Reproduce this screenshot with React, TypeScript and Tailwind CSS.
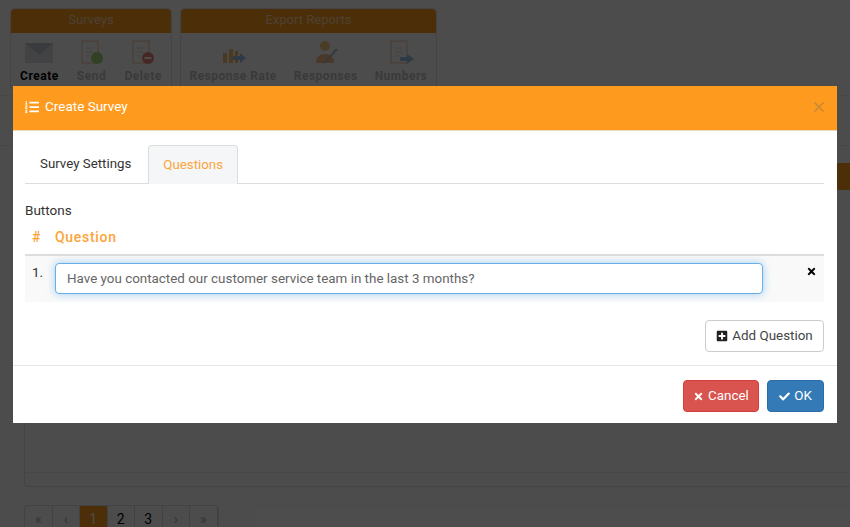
import { FaCheck, FaListOl, FaPlusSquare, FaTimes } from "react-icons/fa";

const font = "font-['Roboto','Liberation_Sans',sans-serif]";

function Panel({ title, className, children }: { title: string; className: string; children: React.ReactNode }) {
  return (
    <div className={`h-[82px] rounded border border-[#e5e5e5] bg-white ${className}`}>
      <div className="h-[24px] rounded-t bg-[#ff9a1f] text-center text-[13px] leading-[22px] text-[#ffd9a8]">{title}</div>
      <div className="flex justify-around pt-[6px]">{children}</div>
    </div>
  );
}

function Tool({ label, dark, children }: { label: string; dark?: boolean; children: React.ReactNode }) {
  return (
    <div className="flex flex-col items-center">
      <svg viewBox="0 0 28 26" className="h-[26px] w-7">{children}</svg>
      <span className={`mt-[2px] text-[12px] leading-[18px] font-bold tracking-[0.5px] ${dark ? "text-black" : "text-[#c4c4c4]"}`}>{label}</span>
    </div>
  );
}

const clipboard = (
  <>
    <rect x="4" y="2" width="16" height="22" fill="#fff" stroke="#f5c09a" strokeWidth="1" />
    <path d="M8 9h7M8 13h7M8 17h4" stroke="#dcdcdc" strokeWidth="1" />
  </>
);

export default function App() {
  return (
    <div className={`relative h-[527px] w-[850px] overflow-hidden bg-white ${font}`}>
      {/* page behind the modal */}
      <div className="flex gap-2 pl-[10px] pt-2">
        <Panel title="Surveys" className="w-[162px]">
          <Tool label="Create" dark>
            <rect x="0" y="4" width="28" height="20" fill="#dfe1e8" />
            <path d="M0 4l14 12L28 4z" fill="#c2c5d0" />
          </Tool>
          <Tool label="Send">
            {clipboard}
            <circle cx="19" cy="19" r="6" fill="#a9d67a" />
          </Tool>
          <Tool label="Delete">
            {clipboard}
            <circle cx="19" cy="19" r="6" fill="#ee7f80" />
            <rect x="15.5" y="18" width="7" height="2" fill="#fff" />
          </Tool>
        </Panel>
        <Panel title="Export Reports" className="w-[257px]">
          <Tool label="Response Rate">
            <path d="M4 24V14h4v10zM10 24V10h4v14zM16 24V12h3v12z" fill="#fbc26f" />
            <path d="M14 17h7v-3l6 5-6 5v-3h-7z" fill="#9cc3ea" />
          </Tool>
          <Tool label="Responses">
            <circle cx="13" cy="7" r="5" fill="#f8cd85" />
            <path d="M4 24c0-6 4-9 9-9s9 3 9 9z" fill="#f7bb8d" />
            <path d="M12 24L25 10" stroke="#bbb" strokeWidth="2" />
          </Tool>
          <Tool label="Numbers">
            {clipboard}
            <path d="M13 18h7v-3l7 5-7 5v-3h-7z" fill="#9cc3ea" />
          </Tool>
        </Panel>
      </div>

      <div className="mt-[5px] h-[51px] border-y border-[#eee]" />

      <div className="ml-[24px] mt-[17px] h-[27px] rounded-tl bg-[#ff9a1f]" />
      <div className="ml-[24px] h-[297px] rounded-bl border-b border-l border-[#e5e5e5] pt-[282px]">
        <div className="border-t border-[#eee]" />
      </div>

      <div className="ml-[24px] mt-[18px] flex w-fit rounded-t border border-b-0 border-[#ddd] text-[14px] leading-[16px] text-black">
        {["«", "‹", "1", "2", "3", "›", "»"].map((p) => (
          <span
            key={p}
            className={`h-[21px] w-[27.5px] border-r border-[#ddd] pt-[5px] text-center ${p === "1" ? "bg-[#ff9a1f] text-white" : ""} ${"«‹›»".includes(p) ? "text-[#aaa]" : ""}`}
          >
            {p}
          </span>
        ))}
      </div>

      {/* backdrop */}
      <div className="absolute inset-0 bg-black/70" />

      {/* modal */}
      <div className="absolute left-[13px] top-[86px] w-[824px] bg-white">
        <div className="flex h-[45px] items-center justify-between border-b border-[#ecd9b8] bg-[#fe9b1f] pb-[3px] pl-3 pr-[13px] text-white">
          <div className="flex items-center gap-[6px] text-[13.5px]">
            <FaListOl size={14} />
            Create Survey
          </div>
          <span className="text-[#cc8a33]">
            <svg viewBox="0 0 10 10" className="h-[10px] w-[10px]" stroke="currentColor" strokeWidth="1.6">
              <path d="M0.5 0.5l9 9M9.5 0.5l-9 9" />
            </svg>
          </span>
        </div>

        <div className="pl-3 pr-[13px] pt-[14px]">
          <div className="flex h-[39px] border-b border-[#ddd] text-[13.3px]">
            <div className="pl-[15px] pr-[17px] pt-[9px] text-[#333]">Survey Settings</div>
            <div className="-mb-px h-[39px] rounded-t border border-b-0 border-[#ddd] bg-[#f5f6f8] px-[14px] pt-[9px] text-[#fda43a]">Questions</div>
          </div>

          <div className="mt-[18px] text-[13.5px] leading-[17px] text-[#333]">Buttons</div>

          <div className="mt-[4px] flex h-[33px] items-start border-b-2 border-[#ddd] pt-[6px] text-[14px] leading-[17px] font-medium text-[#fda43a]">
            <span className="w-[30px] pl-[7px]">#</span>
            <span className="tracking-[0.7px]">Question</span>
          </div>

          <div className="flex h-[46px] items-start bg-[#f9f9f9] pt-[7px]">
            <span className="-mt-px w-[30px] pl-[7px] text-[13.5px] text-[#333]">1.</span>
            <input
              readOnly
              value="Have you contacted our customer service team in the last 3 months?"
              className="h-[31px] w-[708px] rounded border border-[#66afe9] bg-white px-[11px] text-[13.4px] text-[#666] shadow-[0_0_8px_rgba(102,175,233,0.6)] outline-none"
            />
            <span className="ml-auto mr-[7px] pt-[3px] text-black">
              <FaTimes size={11} />
            </span>
          </div>

          <div className="flex justify-end pb-[13px] pt-[18px]">
            <button className="flex h-[32px] w-[119px] items-center justify-center gap-1 rounded border border-[#ccc] bg-white text-[13.4px] text-[#444]">
              <FaPlusSquare size={12} className="text-[#222]" />
              Add Question
            </button>
          </div>
        </div>

        <div className="flex justify-end gap-2 border-t border-[#e5e5e5] pb-[11px] pl-3 pr-[13px] pt-[14px]">
          <button className="flex h-[32px] w-[76px] items-center justify-center gap-1 rounded border border-[#d43f3a] bg-[#d9534f] text-[13.4px] text-white">
            <FaTimes size={11} />
            Cancel
          </button>
          <button className="flex h-[32px] w-[57px] items-center justify-center gap-1 rounded border border-[#2e6da4] bg-[#337ab7] text-[13.4px] text-white">
            <FaCheck size={11} />
            OK
          </button>
        </div>
      </div>
    </div>
  );
}
